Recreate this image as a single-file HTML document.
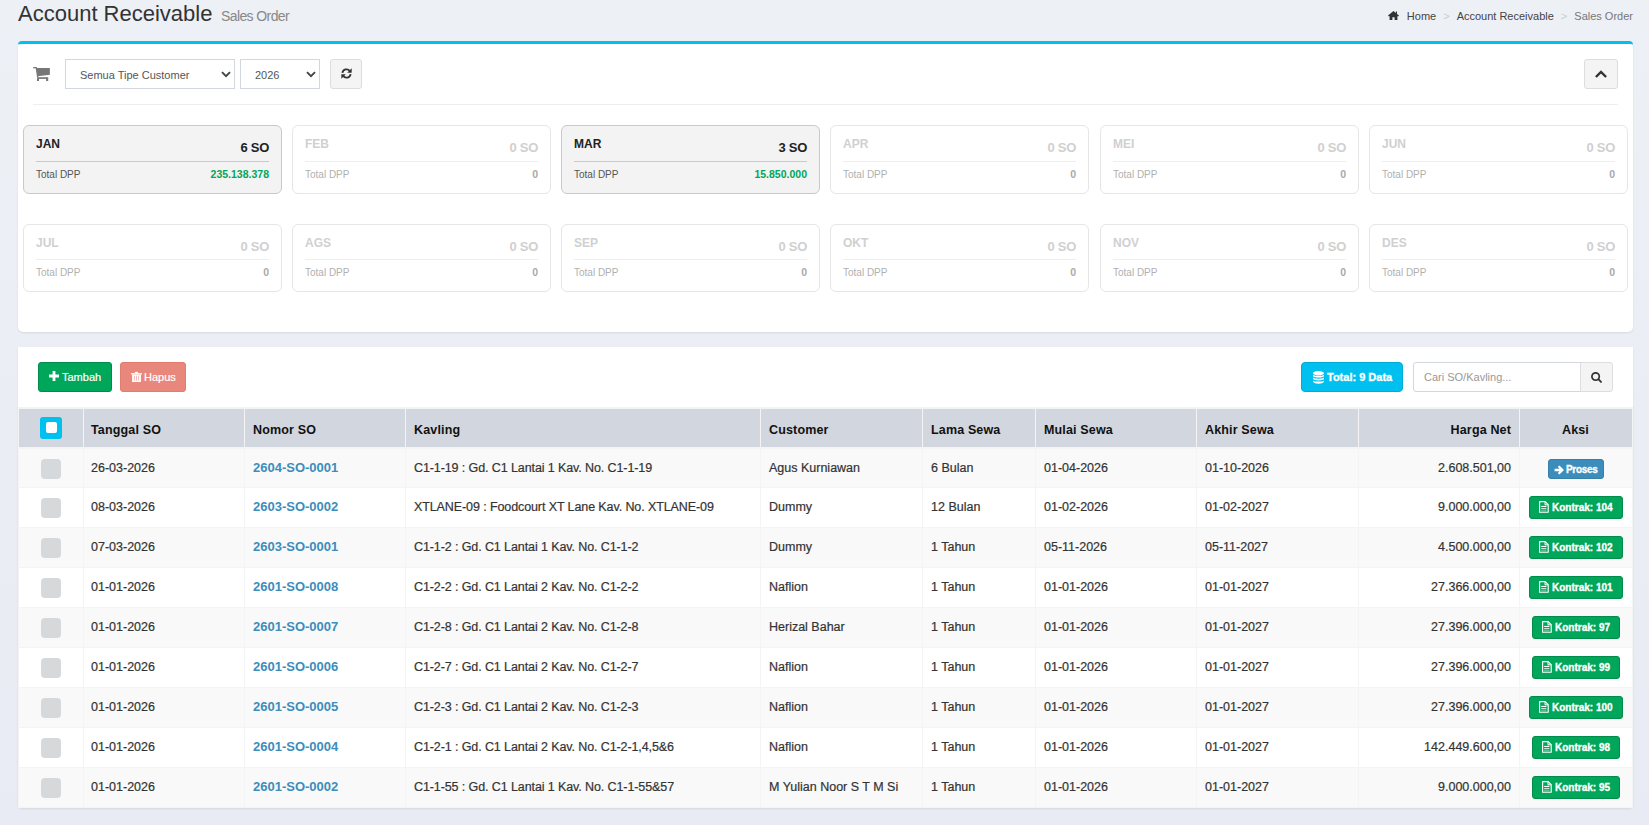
<!DOCTYPE html>
<html><head><meta charset="utf-8">
<style>
*{box-sizing:border-box;margin:0;padding:0}
html,body{width:1649px;height:825px;overflow:hidden;background:linear-gradient(#edf0f5,#e8ebf3);font-family:"Liberation Sans",sans-serif;color:#333;position:relative}
.abs{position:absolute;white-space:nowrap}
.title{left:18px;top:0.5px;font-size:22px;line-height:26px;letter-spacing:0px;color:#333}
.subtitle{left:221px;top:8px;font-size:14px;line-height:16px;letter-spacing:-0.6px;color:#888}
.bc{top:9px;right:16px;font-size:11px;line-height:14px;color:#444}
.bc .sep{color:#ccc;padding:0 7px}
.bc .act{color:#777}
.box{position:absolute;left:18px;width:1615px;background:#fff;border-radius:4px 4px 5px 5px;box-shadow:0 1px 2px rgba(0,0,0,.09)}
.box1{top:41px;height:291px;border-top:3px solid #00c0ef}
.box2{top:347px;height:461px;border-radius:0 0 4px 4px}
.sel{position:absolute;top:59px;height:30px;border:1px solid #d2d6de;background:#fff;font-size:11px;color:#555}
.sel span{position:absolute;top:8px;line-height:14px}
.sel svg{position:absolute;top:10.5px}
.btn-def{position:absolute;background:#f4f4f4;border:1px solid #ddd;border-radius:3px}
.divider{position:absolute;left:33px;top:104px;width:1585px;height:1px;background:#eee}
.card{position:absolute;width:259px;height:69px;border:1px solid #e6e6e6;border-radius:6px;background:#fff}
.card.on{background:#f3f3f3;border-color:#c9c9c9}
.card .m{position:absolute;left:12px;top:10px;font-size:12px;font-weight:700;line-height:16px;color:#d0d0d0}
.card .n{position:absolute;right:12px;top:13px;font-size:13px;letter-spacing:-0.25px;font-weight:700;line-height:17px;color:#d0d0d0}
.card .ln{position:absolute;left:12px;right:12px;top:35px;height:1px;background:#eee}
.card .t{position:absolute;left:12px;top:42px;font-size:10px;line-height:13px;color:#b0b0b0}
.card .v{position:absolute;right:12px;top:42px;font-size:10.5px;font-weight:700;line-height:13px;color:#aaa}
.card.r2{height:68px}.card.r2 .ln{top:34px}.card.r2 .t,.card.r2 .v{top:41px}
.card.on .m,.card.on .n{color:#222}
.card.on .ln{background:#c9c9c9}
.card.on .t{color:#555}
.card.on .v{color:#00a65a}
.btn{position:absolute;height:30px;border:1px solid;border-radius:3px;color:#fff;font-size:11px}
.btn span{position:absolute;top:7px;line-height:14px;-webkit-text-stroke:0.2px #fff}
.btn.bold{font-weight:700}.btn.bold span{-webkit-text-stroke:0.3px #fff}
.thbg{left:19px;top:409px;width:1613px;height:38px;background:#d2d6de}
.rowbg{left:19px;width:1613px}
.hl{left:19px;width:1613px;height:1px;background:#f4f4f4}
.vl{top:409px;width:1px;height:398px;background:#f4f4f4}
.th{top:423px;font-size:12.5px;font-weight:700;line-height:14px;color:#111;letter-spacing:0.15px}
.td{font-size:12.5px;line-height:14px;color:#333;-webkit-text-stroke:0.2px}
.td.kv{letter-spacing:-0.1px}
.td.lnk{font-size:13px;font-weight:700;color:#3c8dbc;-webkit-text-stroke:0}
.hcb{left:40px;top:417px;width:22px;height:22px;background:#00c0ef;border-radius:3px}
.hcb div{position:absolute;left:6px;top:5px;width:11px;height:11px;background:#fff;border-radius:2px}
.cb{left:41px;width:20px;height:20px;background:#d5d9dc;border-radius:4px}
.bproses{left:1548px;width:56px;height:20px;background:#3c8dbc;border:1px solid #367fa9;border-radius:3px;color:#fff;font-size:10px;font-weight:700;letter-spacing:-0.3px}
.bproses span{position:absolute;left:17px;top:3px;line-height:13px;-webkit-text-stroke:0.3px #fff}
.bkon{height:23px;background:#00a65a;border:1px solid #008d4c;border-radius:3px;color:#fff;font-size:10px;font-weight:700}
.bkon span{position:absolute;left:22px;top:4px;line-height:13px;-webkit-text-stroke:0.3px #fff}
</style></head><body>
<div class="abs title">Account Receivable</div>
<div class="abs subtitle">Sales Order</div>
<div class="abs bc"><svg width="11" height="9" viewBox="0 0 11 9" style="vertical-align:0;margin-right:8px"><path d="M5.5 0L0 4.6 1 5.4 1.6 4.9V9H4.4V6.3H6.6V9H9.4V4.9L10 5.4 11 4.6 9 2.9V.6H7.9V2L5.5 0Z" fill="#333"/></svg>Home<span class="sep">&gt;</span>Account Receivable<span class="sep">&gt;</span><span class="act">Sales Order</span></div>

<div class="box box1"></div>
<svg class="abs" style="left:33px;top:66px" width="18" height="15" viewBox="0 0 18 15"><path d="M0 1.1H3.6V2.3H0Z" fill="#777"/><path d="M3.4 2H16.9V8.8L4.6 10.2Z" fill="#777"/><path d="M2.5 1.1H3.7L5.4 11.4H4.1Z" fill="#777"/><path d="M4.2 11.2H15.2V12.9H4.2Z" fill="#777"/><rect x="4" y="12.5" width="2" height="2.5" fill="#777"/><rect x="13.1" y="12.5" width="2.1" height="2.5" fill="#777"/></svg>
<div class="sel" style="left:65px;width:170px"><span style="left:14px">Semua Tipe Customer</span><svg style="left:155px" width="10" height="7" viewBox="0 0 10 7"><path d="M1 1.2L5 5.2 9 1.2" stroke="#444" stroke-width="1.9" fill="none"/></svg></div>
<div class="sel" style="left:240px;width:80px"><span style="left:14px">2026</span><svg style="left:65px" width="10" height="7" viewBox="0 0 10 7"><path d="M1 1.2L5 5.2 9 1.2" stroke="#444" stroke-width="1.9" fill="none"/></svg></div>
<div class="btn-def" style="left:330px;top:59px;width:32px;height:30px"><svg style="position:absolute;left:9.5px;top:8.3px" width="11" height="11" viewBox="0 0 11 11"><path d="M1.4 4.9A4.1 4.1 0 0 1 8.9 3.2" stroke="#333" stroke-width="1.8" fill="none"/><path d="M10.7 0.3V4.8H6.2Z" fill="#333"/><path d="M9.6 6.1A4.1 4.1 0 0 1 2.1 7.8" stroke="#333" stroke-width="1.8" fill="none"/><path d="M0.3 10.7V6.2H4.8Z" fill="#333"/></svg></div>
<div class="btn-def" style="left:1584px;top:59px;width:34px;height:30px"><svg style="position:absolute;left:10px;top:9.5px" width="12" height="8" viewBox="0 0 12 8"><path d="M0.9 7L6 1.9 11.1 7" stroke="#333" stroke-width="2.4" fill="none"/></svg></div>
<div class="divider"></div>
<div class="card on" style="left:23px;top:125px"><div class="m">JAN</div><div class="n">6 SO</div><div class="ln"></div><div class="t">Total DPP</div><div class="v">235.138.378</div></div>
<div class="card" style="left:292px;top:125px"><div class="m">FEB</div><div class="n">0 SO</div><div class="ln"></div><div class="t">Total DPP</div><div class="v">0</div></div>
<div class="card on" style="left:561px;top:125px"><div class="m">MAR</div><div class="n">3 SO</div><div class="ln"></div><div class="t">Total DPP</div><div class="v">15.850.000</div></div>
<div class="card" style="left:830px;top:125px"><div class="m">APR</div><div class="n">0 SO</div><div class="ln"></div><div class="t">Total DPP</div><div class="v">0</div></div>
<div class="card" style="left:1100px;top:125px"><div class="m">MEI</div><div class="n">0 SO</div><div class="ln"></div><div class="t">Total DPP</div><div class="v">0</div></div>
<div class="card" style="left:1369px;top:125px"><div class="m">JUN</div><div class="n">0 SO</div><div class="ln"></div><div class="t">Total DPP</div><div class="v">0</div></div>
<div class="card r2" style="left:23px;top:224px"><div class="m">JUL</div><div class="n">0 SO</div><div class="ln"></div><div class="t">Total DPP</div><div class="v">0</div></div>
<div class="card r2" style="left:292px;top:224px"><div class="m">AGS</div><div class="n">0 SO</div><div class="ln"></div><div class="t">Total DPP</div><div class="v">0</div></div>
<div class="card r2" style="left:561px;top:224px"><div class="m">SEP</div><div class="n">0 SO</div><div class="ln"></div><div class="t">Total DPP</div><div class="v">0</div></div>
<div class="card r2" style="left:830px;top:224px"><div class="m">OKT</div><div class="n">0 SO</div><div class="ln"></div><div class="t">Total DPP</div><div class="v">0</div></div>
<div class="card r2" style="left:1100px;top:224px"><div class="m">NOV</div><div class="n">0 SO</div><div class="ln"></div><div class="t">Total DPP</div><div class="v">0</div></div>
<div class="card r2" style="left:1369px;top:224px"><div class="m">DES</div><div class="n">0 SO</div><div class="ln"></div><div class="t">Total DPP</div><div class="v">0</div></div>
<div class="box box2"></div>
<div class="abs btn" style="left:38px;top:362px;width:74px;background:#00a65a;border-color:#008d4c"><svg width="10" height="10" viewBox="0 0 10 10" style="position:absolute;left:9.8px;top:8px"><path d="M5 0V10M0 5H10" stroke="#fff" stroke-width="2.8"/></svg><span style="left:23px">Tambah</span></div>
<div class="abs btn" style="left:120px;top:362px;width:66px;background:#e8887c;border-color:#e37b6e"><svg width="11" height="11" viewBox="0 0 11 11" style="position:absolute;left:10px;top:8px"><path d="M0 2.2H11V3.5H0Z" fill="#fff"/><path d="M3.4 2.4C3.6 0.3 7.4 0.3 7.6 2.4Z" fill="#fff"/><path d="M1.1 3.5H9.9V11H1.1Z" fill="#fff"/><path d="M3.4 4.6V9.6M5.5 4.6V9.6M7.6 4.6V9.6" stroke="#f0b5ad" stroke-width="0.9"/></svg><span style="left:23px">Hapus</span></div>
<div class="abs btn bold" style="left:1301px;top:362px;width:102px;background:#00c0ef;border-color:#00acd6;border-radius:4px"><svg width="11" height="13" viewBox="0 0 11 13" style="position:absolute;left:11px;top:7.5px"><ellipse cx="5.5" cy="2.3" rx="5.5" ry="2.2" fill="#fff"/><path d="M0 3.7C1.2 5.3 9.8 5.3 11 3.7V5.2C9.8 7 1.2 7 0 5.2Z" fill="#fff"/><path d="M0 6.5C1.2 8.1 9.8 8.1 11 6.5V8.1C9.8 9.9 1.2 9.9 0 8.1Z" fill="#fff"/><path d="M0 9.4C1.2 11 9.8 11 11 9.4V10.8C9.8 13.3 1.2 13.3 0 10.8Z" fill="#fff"/></svg><span style="left:25px;top:7px">Total: 9 Data</span></div>
<div class="abs" style="left:1413px;top:362px;width:168px;height:30px;border:1px solid #d2d6de;border-radius:3px 0 0 3px;background:#fff"><span class="abs" style="left:10px;top:7px;font-size:11px;line-height:14px;color:#999">Cari SO/Kavling...</span></div>
<div class="abs btn-def" style="left:1580px;top:362px;width:33px;height:30px;border-radius:0 3px 3px 0"><svg width="13" height="12" viewBox="0 0 13 12" style="position:absolute;left:10px;top:8.5px"><circle cx="4.6" cy="4.5" r="3.7" stroke="#333" stroke-width="1.7" fill="none"/><path d="M7.3 7.2L10 9.9" stroke="#333" stroke-width="1.9" stroke-linecap="round"/></svg></div>
<div class="abs" style="left:18px;top:408px;width:1615px;height:400px;border:1px solid #f4f4f4;border-bottom:0"></div>
<div class="abs thbg"></div>
<div class="abs" style="left:18px;top:407px;width:1615px;height:2px;background:#f3f3f3"></div>
<div class="abs rowbg" style="top:447px;height:40px;background:#f9f9f9"></div>
<div class="abs hl" style="top:487px"></div>
<div class="abs hl" style="top:447px;height:2px"></div>
<div class="abs rowbg" style="top:488px;height:39px;background:#fff"></div>
<div class="abs hl" style="top:527px"></div>
<div class="abs rowbg" style="top:528px;height:39px;background:#f9f9f9"></div>
<div class="abs hl" style="top:567px"></div>
<div class="abs rowbg" style="top:568px;height:39px;background:#fff"></div>
<div class="abs hl" style="top:607px"></div>
<div class="abs rowbg" style="top:608px;height:39px;background:#f9f9f9"></div>
<div class="abs hl" style="top:647px"></div>
<div class="abs rowbg" style="top:648px;height:39px;background:#fff"></div>
<div class="abs hl" style="top:687px"></div>
<div class="abs rowbg" style="top:688px;height:39px;background:#f9f9f9"></div>
<div class="abs hl" style="top:727px"></div>
<div class="abs rowbg" style="top:728px;height:39px;background:#fff"></div>
<div class="abs hl" style="top:767px"></div>
<div class="abs rowbg" style="top:768px;height:39px;background:#f9f9f9"></div>
<div class="abs hl" style="top:807px"></div>
<div class="abs vl" style="left:83px"></div>
<div class="abs vl" style="left:244px"></div>
<div class="abs vl" style="left:405px"></div>
<div class="abs vl" style="left:760px"></div>
<div class="abs vl" style="left:922px"></div>
<div class="abs vl" style="left:1035px"></div>
<div class="abs vl" style="left:1196px"></div>
<div class="abs vl" style="left:1358px"></div>
<div class="abs vl" style="left:1519px"></div>
<div class="abs th" style="left:91px">Tanggal SO</div>
<div class="abs th" style="left:253px">Nomor SO</div>
<div class="abs th" style="left:414px">Kavling</div>
<div class="abs th" style="left:769px">Customer</div>
<div class="abs th" style="left:931px">Lama Sewa</div>
<div class="abs th" style="left:1044px">Mulai Sewa</div>
<div class="abs th" style="left:1205px">Akhir Sewa</div>
<div class="abs th" style="right:138px">Harga Net</div>
<div class="abs th" style="left:1519px;width:113px;text-align:center">Aksi</div>
<div class="abs hcb"><div></div></div>
<div class="abs cb" style="top:459px"></div>
<div class="abs td" style="left:91px;top:461px">26-03-2026</div>
<div class="abs td lnk" style="left:253px;top:461px">2604-SO-0001</div>
<div class="abs td kv" style="left:414px;top:461px">C1-1-19 : Gd. C1 Lantai 1 Kav. No. C1-1-19</div>
<div class="abs td" style="left:769px;top:461px">Agus Kurniawan</div>
<div class="abs td" style="left:931px;top:461px">6 Bulan</div>
<div class="abs td" style="left:1044px;top:461px">01-04-2026</div>
<div class="abs td" style="left:1205px;top:461px">01-10-2026</div>
<div class="abs td" style="right:138px;top:461px">2.608.501,00</div>
<div class="abs bproses" style="top:459px"><svg width="10" height="10" viewBox="0 0 10 10" style="position:absolute;left:5px;top:5px"><path d="M0.6 5H8.4M4.6 1.2L8.4 5 4.6 8.8" stroke="#fff" stroke-width="2.3" fill="none" stroke-linejoin="miter"/></svg><span>Proses</span></div>
<div class="abs cb" style="top:498px"></div>
<div class="abs td" style="left:91px;top:500px">08-03-2026</div>
<div class="abs td lnk" style="left:253px;top:500px">2603-SO-0002</div>
<div class="abs td kv" style="left:414px;top:500px">XTLANE-09 : Foodcourt XT Lane Kav. No. XTLANE-09</div>
<div class="abs td" style="left:769px;top:500px">Dummy</div>
<div class="abs td" style="left:931px;top:500px">12 Bulan</div>
<div class="abs td" style="left:1044px;top:500px">01-02-2026</div>
<div class="abs td" style="left:1205px;top:500px">01-02-2027</div>
<div class="abs td" style="right:138px;top:500px">9.000.000,00</div>
<div class="abs bkon" style="left:1529.0px;top:496px;width:94px"><svg width="10" height="12" viewBox="0 0 10 12" style="position:absolute;left:9.3px;top:4.3px"><path d="M0.6 0.6H6.2L9.2 3.6V11.2H0.6Z" stroke="#fff" stroke-width="1.15" fill="none" stroke-linejoin="round"/><path d="M6 0.8V3.8H9" stroke="#fff" stroke-width="1" fill="none"/><rect x="2.2" y="4.9" width="5.2" height="1.1" fill="#fff"/><rect x="2.2" y="7.1" width="5.2" height="1.1" fill="#fff" opacity="0.85"/><rect x="2.2" y="9.1" width="5.2" height="1.3" fill="#fff" opacity="0.35"/></svg><span>Kontrak: 104</span></div>
<div class="abs cb" style="top:538px"></div>
<div class="abs td" style="left:91px;top:540px">07-03-2026</div>
<div class="abs td lnk" style="left:253px;top:540px">2603-SO-0001</div>
<div class="abs td kv" style="left:414px;top:540px">C1-1-2 : Gd. C1 Lantai 1 Kav. No. C1-1-2</div>
<div class="abs td" style="left:769px;top:540px">Dummy</div>
<div class="abs td" style="left:931px;top:540px">1 Tahun</div>
<div class="abs td" style="left:1044px;top:540px">05-11-2026</div>
<div class="abs td" style="left:1205px;top:540px">05-11-2027</div>
<div class="abs td" style="right:138px;top:540px">4.500.000,00</div>
<div class="abs bkon" style="left:1529.0px;top:536px;width:94px"><svg width="10" height="12" viewBox="0 0 10 12" style="position:absolute;left:9.3px;top:4.3px"><path d="M0.6 0.6H6.2L9.2 3.6V11.2H0.6Z" stroke="#fff" stroke-width="1.15" fill="none" stroke-linejoin="round"/><path d="M6 0.8V3.8H9" stroke="#fff" stroke-width="1" fill="none"/><rect x="2.2" y="4.9" width="5.2" height="1.1" fill="#fff"/><rect x="2.2" y="7.1" width="5.2" height="1.1" fill="#fff" opacity="0.85"/><rect x="2.2" y="9.1" width="5.2" height="1.3" fill="#fff" opacity="0.35"/></svg><span>Kontrak: 102</span></div>
<div class="abs cb" style="top:578px"></div>
<div class="abs td" style="left:91px;top:580px">01-01-2026</div>
<div class="abs td lnk" style="left:253px;top:580px">2601-SO-0008</div>
<div class="abs td kv" style="left:414px;top:580px">C1-2-2 : Gd. C1 Lantai 2 Kav. No. C1-2-2</div>
<div class="abs td" style="left:769px;top:580px">Naflion</div>
<div class="abs td" style="left:931px;top:580px">1 Tahun</div>
<div class="abs td" style="left:1044px;top:580px">01-01-2026</div>
<div class="abs td" style="left:1205px;top:580px">01-01-2027</div>
<div class="abs td" style="right:138px;top:580px">27.366.000,00</div>
<div class="abs bkon" style="left:1529.0px;top:576px;width:94px"><svg width="10" height="12" viewBox="0 0 10 12" style="position:absolute;left:9.3px;top:4.3px"><path d="M0.6 0.6H6.2L9.2 3.6V11.2H0.6Z" stroke="#fff" stroke-width="1.15" fill="none" stroke-linejoin="round"/><path d="M6 0.8V3.8H9" stroke="#fff" stroke-width="1" fill="none"/><rect x="2.2" y="4.9" width="5.2" height="1.1" fill="#fff"/><rect x="2.2" y="7.1" width="5.2" height="1.1" fill="#fff" opacity="0.85"/><rect x="2.2" y="9.1" width="5.2" height="1.3" fill="#fff" opacity="0.35"/></svg><span>Kontrak: 101</span></div>
<div class="abs cb" style="top:618px"></div>
<div class="abs td" style="left:91px;top:620px">01-01-2026</div>
<div class="abs td lnk" style="left:253px;top:620px">2601-SO-0007</div>
<div class="abs td kv" style="left:414px;top:620px">C1-2-8 : Gd. C1 Lantai 2 Kav. No. C1-2-8</div>
<div class="abs td" style="left:769px;top:620px">Herizal Bahar</div>
<div class="abs td" style="left:931px;top:620px">1 Tahun</div>
<div class="abs td" style="left:1044px;top:620px">01-01-2026</div>
<div class="abs td" style="left:1205px;top:620px">01-01-2027</div>
<div class="abs td" style="right:138px;top:620px">27.396.000,00</div>
<div class="abs bkon" style="left:1532.0px;top:616px;width:88px"><svg width="10" height="12" viewBox="0 0 10 12" style="position:absolute;left:9.3px;top:4.3px"><path d="M0.6 0.6H6.2L9.2 3.6V11.2H0.6Z" stroke="#fff" stroke-width="1.15" fill="none" stroke-linejoin="round"/><path d="M6 0.8V3.8H9" stroke="#fff" stroke-width="1" fill="none"/><rect x="2.2" y="4.9" width="5.2" height="1.1" fill="#fff"/><rect x="2.2" y="7.1" width="5.2" height="1.1" fill="#fff" opacity="0.85"/><rect x="2.2" y="9.1" width="5.2" height="1.3" fill="#fff" opacity="0.35"/></svg><span>Kontrak: 97</span></div>
<div class="abs cb" style="top:658px"></div>
<div class="abs td" style="left:91px;top:660px">01-01-2026</div>
<div class="abs td lnk" style="left:253px;top:660px">2601-SO-0006</div>
<div class="abs td kv" style="left:414px;top:660px">C1-2-7 : Gd. C1 Lantai 2 Kav. No. C1-2-7</div>
<div class="abs td" style="left:769px;top:660px">Naflion</div>
<div class="abs td" style="left:931px;top:660px">1 Tahun</div>
<div class="abs td" style="left:1044px;top:660px">01-01-2026</div>
<div class="abs td" style="left:1205px;top:660px">01-01-2027</div>
<div class="abs td" style="right:138px;top:660px">27.396.000,00</div>
<div class="abs bkon" style="left:1532.0px;top:656px;width:88px"><svg width="10" height="12" viewBox="0 0 10 12" style="position:absolute;left:9.3px;top:4.3px"><path d="M0.6 0.6H6.2L9.2 3.6V11.2H0.6Z" stroke="#fff" stroke-width="1.15" fill="none" stroke-linejoin="round"/><path d="M6 0.8V3.8H9" stroke="#fff" stroke-width="1" fill="none"/><rect x="2.2" y="4.9" width="5.2" height="1.1" fill="#fff"/><rect x="2.2" y="7.1" width="5.2" height="1.1" fill="#fff" opacity="0.85"/><rect x="2.2" y="9.1" width="5.2" height="1.3" fill="#fff" opacity="0.35"/></svg><span>Kontrak: 99</span></div>
<div class="abs cb" style="top:698px"></div>
<div class="abs td" style="left:91px;top:700px">01-01-2026</div>
<div class="abs td lnk" style="left:253px;top:700px">2601-SO-0005</div>
<div class="abs td kv" style="left:414px;top:700px">C1-2-3 : Gd. C1 Lantai 2 Kav. No. C1-2-3</div>
<div class="abs td" style="left:769px;top:700px">Naflion</div>
<div class="abs td" style="left:931px;top:700px">1 Tahun</div>
<div class="abs td" style="left:1044px;top:700px">01-01-2026</div>
<div class="abs td" style="left:1205px;top:700px">01-01-2027</div>
<div class="abs td" style="right:138px;top:700px">27.396.000,00</div>
<div class="abs bkon" style="left:1529.0px;top:696px;width:94px"><svg width="10" height="12" viewBox="0 0 10 12" style="position:absolute;left:9.3px;top:4.3px"><path d="M0.6 0.6H6.2L9.2 3.6V11.2H0.6Z" stroke="#fff" stroke-width="1.15" fill="none" stroke-linejoin="round"/><path d="M6 0.8V3.8H9" stroke="#fff" stroke-width="1" fill="none"/><rect x="2.2" y="4.9" width="5.2" height="1.1" fill="#fff"/><rect x="2.2" y="7.1" width="5.2" height="1.1" fill="#fff" opacity="0.85"/><rect x="2.2" y="9.1" width="5.2" height="1.3" fill="#fff" opacity="0.35"/></svg><span>Kontrak: 100</span></div>
<div class="abs cb" style="top:738px"></div>
<div class="abs td" style="left:91px;top:740px">01-01-2026</div>
<div class="abs td lnk" style="left:253px;top:740px">2601-SO-0004</div>
<div class="abs td kv" style="left:414px;top:740px">C1-2-1 : Gd. C1 Lantai 2 Kav. No. C1-2-1,4,5&amp;6</div>
<div class="abs td" style="left:769px;top:740px">Naflion</div>
<div class="abs td" style="left:931px;top:740px">1 Tahun</div>
<div class="abs td" style="left:1044px;top:740px">01-01-2026</div>
<div class="abs td" style="left:1205px;top:740px">01-01-2027</div>
<div class="abs td" style="right:138px;top:740px">142.449.600,00</div>
<div class="abs bkon" style="left:1532.0px;top:736px;width:88px"><svg width="10" height="12" viewBox="0 0 10 12" style="position:absolute;left:9.3px;top:4.3px"><path d="M0.6 0.6H6.2L9.2 3.6V11.2H0.6Z" stroke="#fff" stroke-width="1.15" fill="none" stroke-linejoin="round"/><path d="M6 0.8V3.8H9" stroke="#fff" stroke-width="1" fill="none"/><rect x="2.2" y="4.9" width="5.2" height="1.1" fill="#fff"/><rect x="2.2" y="7.1" width="5.2" height="1.1" fill="#fff" opacity="0.85"/><rect x="2.2" y="9.1" width="5.2" height="1.3" fill="#fff" opacity="0.35"/></svg><span>Kontrak: 98</span></div>
<div class="abs cb" style="top:778px"></div>
<div class="abs td" style="left:91px;top:780px">01-01-2026</div>
<div class="abs td lnk" style="left:253px;top:780px">2601-SO-0002</div>
<div class="abs td kv" style="left:414px;top:780px">C1-1-55 : Gd. C1 Lantai 1 Kav. No. C1-1-55&amp;57</div>
<div class="abs td" style="left:769px;top:780px">M Yulian Noor S T M Si</div>
<div class="abs td" style="left:931px;top:780px">1 Tahun</div>
<div class="abs td" style="left:1044px;top:780px">01-01-2026</div>
<div class="abs td" style="left:1205px;top:780px">01-01-2027</div>
<div class="abs td" style="right:138px;top:780px">9.000.000,00</div>
<div class="abs bkon" style="left:1532.0px;top:776px;width:88px"><svg width="10" height="12" viewBox="0 0 10 12" style="position:absolute;left:9.3px;top:4.3px"><path d="M0.6 0.6H6.2L9.2 3.6V11.2H0.6Z" stroke="#fff" stroke-width="1.15" fill="none" stroke-linejoin="round"/><path d="M6 0.8V3.8H9" stroke="#fff" stroke-width="1" fill="none"/><rect x="2.2" y="4.9" width="5.2" height="1.1" fill="#fff"/><rect x="2.2" y="7.1" width="5.2" height="1.1" fill="#fff" opacity="0.85"/><rect x="2.2" y="9.1" width="5.2" height="1.3" fill="#fff" opacity="0.35"/></svg><span>Kontrak: 95</span></div>
</body></html>
